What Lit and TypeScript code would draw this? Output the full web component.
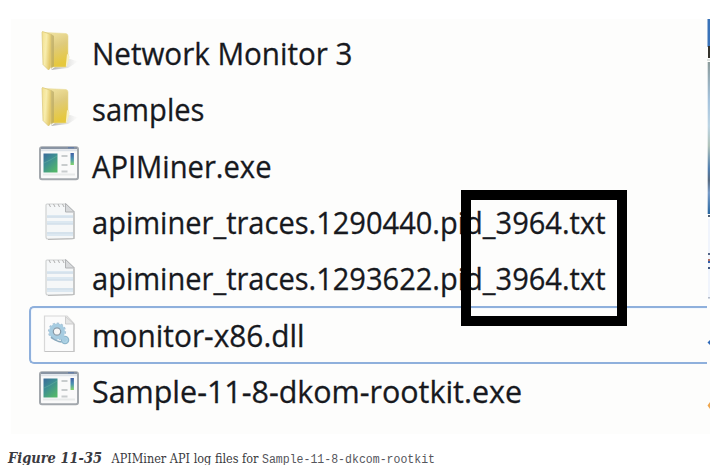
import { LitElement, html, svg, css } from "lit";
import { customElement, property } from "lit/decorators.js";

type Kind = "folder" | "exe" | "txt" | "dll";
interface Entry { name: string; kind: Kind; width: number; selected?: boolean }

const entries: Entry[] = [
  { name: "Network Monitor 3", kind: "folder", width: 260.5 },
  { name: "samples", kind: "folder", width: 112.5 },
  { name: "APIMiner.exe", kind: "exe", width: 179.5 },
  { name: "apiminer_traces.1290440.pid_3964.txt", kind: "txt", width: 513.5 },
  { name: "apiminer_traces.1293622.pid_3964.txt", kind: "txt", width: 513.5 },
  { name: "monitor-x86.dll", kind: "dll", width: 212.5 },
  { name: "Sample-11-8-dkom-rootkit.exe", kind: "exe", width: 430 },
];

const folder = svg`
  <defs>
    <linearGradient id="front" x1="0" x2="1" y1="0" y2="0.3"><stop offset="0" stop-color="#f3e08c"/><stop offset="0.5" stop-color="#f8edae"/><stop offset="1" stop-color="#e3c869"/></linearGradient>
    <linearGradient id="back" x1="0" x2="0.3" y1="0" y2="1"><stop offset="0" stop-color="#f3e6a6"/><stop offset="0.5" stop-color="#dfcb7d"/><stop offset="1" stop-color="#e6c83e"/></linearGradient>
    <linearGradient id="shade" x1="0" x2="1"><stop offset="0" stop-color="#999" stop-opacity="0.8"/><stop offset="1" stop-color="#bbb" stop-opacity="0"/></linearGradient>
  </defs>
  <path d="M28 28L39 31.5L29 38L12 40Z" fill="url(#shade)"/>
  <path d="M5 2.5L27 3.5Q29 4 29 6V24L30 27L27 37L12 37Z" fill="url(#back)" stroke="#eadb98" stroke-width=".6"/>
  <path d="M12 4L15 6V36L12 39Z" fill="#b9a763" opacity=".65"/>
  <path d="M3 2Q3 1 5 2L12 4.5V35Q12 38 9.5 40L4 34.5Z" fill="url(#front)" stroke="#d8c578" stroke-width=".7"/>
  <path d="M28 24Q31 25 30 29L28 36Q26.5 38 27 34Z" fill="#f8f0c4"/>`;

const exe = svg`
  <defs>
    <linearGradient id="pane" x1="0" x2=".7" y1="0" y2="1"><stop offset="0" stop-color="#3a6999"/><stop offset=".45" stop-color="#3e8e93"/><stop offset="1" stop-color="#52b56b"/></linearGradient>
    <linearGradient id="bar" x1="0" x2="0" y1="0" y2="1"><stop offset="0" stop-color="#405fa5"/><stop offset=".5" stop-color="#4b93b0"/><stop offset="1" stop-color="#83d669"/></linearGradient>
  </defs>
  <rect x="1" y="4.2" width="38" height="32" rx="2" fill="#fafafa" stroke="#a3a8ad" stroke-width="2"/>
  <path d="M2 5H38" stroke="#8994a3" stroke-width="2"/>
  <path d="M2 7.2H38" stroke="#dde2e8" stroke-width="2"/>
  <path d="M29 4.7H35" stroke="#667fa8" stroke-width="1.4"/>
  <rect x="4.5" y="10.5" width="14" height="19" fill="url(#pane)"/>
  <path d="M5 20Q10 18 18 13" stroke="#69b6a0" opacity=".5" fill="none"/>
  <path d="M22.5 13H28.5M22.5 22H28.5M22.5 28.5H28.5" stroke="#c8cccd" stroke-width="2"/>
  <rect x="31.5" y="10" width="3.4" height="12" fill="url(#bar)"/>
  <path d="M4 31.5H36" stroke="#e8eaea" stroke-width="2"/>`;

const txt = svg`
  <path d="M8 5H27L35 13V38.5Q35 40 33 40H9Q7 40 7 38V6Q7 5 8 5Z" fill="#f5f7f8" stroke="#d0d2d2" stroke-width="1.2"/>
  <path d="M35 14V39.5L9 40.5" fill="none" stroke="#b8b9b9" stroke-width="1.2"/>
  <path d="M8 16H34V18.5H8ZM8 22H34V25H8ZM8 33H34V37H8Z" fill="#dce8f1"/>
  <path d="M8 18H34M8 25H34M8 34H34" stroke="#d2e0ea" stroke-width="1.6"/>
  <path d="M26.5 4.5V13H35.5Z" fill="#d8dadc" stroke="#b0b2b4" stroke-width="1"/>
  <path d="M10 5L11.5 8M14.5 5L16 8M19 5L20.5 8M23.5 5L25 8" stroke="#b0b0b0" stroke-width="1"/>`;

const dll = svg`
  <path d="M5.5 4H28L35 11.5V39.5H5.5Z" fill="#fbfbfb" stroke="#d8d8d8" stroke-width="1.2"/>
  <path d="M35 12V39.5H6" fill="none" stroke="#c4c4c4" stroke-width="1.2"/>
  <path d="M26.5 4.5V12H35Z" fill="#e5e5e5" stroke="#c4c4c4" stroke-width=".8"/>
  <circle cx="18" cy="19.5" r="8.3" fill="none" stroke="#a9c3d6" stroke-width="1.6" stroke-dasharray="2.3 2"/>
  <circle cx="18" cy="19.5" r="6" fill="#f1f5f7" stroke="#a6cce1" stroke-width="4"/>
  <circle cx="18" cy="19.5" r="3.7" fill="#f6f6f6" stroke="#8297a6" stroke-width="1.2"/>
  <path d="M12 25Q17 29.5 22.5 30" fill="none" stroke="#87a6ba" stroke-width="1.4"/>
  <circle cx="26" cy="28" r="3.6" fill="#b2d7e8" stroke="#8fb6cb" stroke-width="1.4"/>
  <path d="M22 24L27 29" stroke="#a6cce1" stroke-width="4"/>`;

const icons = { folder, exe, txt, dll };

@customElement("file-row")
class FileRow extends LitElement {
  @property({ attribute: false }) entry!: Entry;

  static styles = css`
    :host { display: block; height: 56.4px; }
    .row { box-sizing: border-box; height: 57.4px; display: flex; align-items: center; padding-left: 8px; border: 2px solid transparent; border-right: 0; border-radius: 5px 0 0 5px; }
    .selected { border-color: #8fb0dc; box-shadow: inset 1px 1px 0 #f3f8fe; }
    .icon { width: 40px; height: 42px; flex: none; margin: 0 13px 4px 0; filter: blur(.45px); }
    .name { width: 520px; height: 50px; flex: none; overflow: visible; }
    text { font: 31.5px "Open Sans", "Noto Sans", sans-serif; fill: #17191e; stroke: #17191e; stroke-width: .3px; }
  `;

  render() {
    const e = this.entry;
    return html`<div class="row ${e.selected ? "selected" : ""}">
      <svg class="icon" viewBox="0 0 40 42">${icons[e.kind]}</svg>
      <svg class="name"><text x="0" y="37.4" textLength=${e.width} lengthAdjust="spacingAndGlyphs">${e.name}</text></svg>
    </div>`;
  }
}

@customElement("app-root")
class AppRoot extends LitElement {
  static styles = css`
    :host { display: block; box-sizing: border-box; width: 721px; height: 465px; overflow: hidden; background: #fff; padding: 19px 0 0 11px; }
    .panel { position: relative; box-sizing: border-box; display: flex; width: 699px; height: 415px; background: #fdfdfc; }
    .list { flex: 1; padding: 5.2px 0 0 18px; }
    .highlight { position: absolute; left: 450px; top: 171px; box-sizing: border-box; width: 165.5px; height: 136px; border: 10px solid #000; }
    .edge { width: 3px; height: 415px; flex: none; }
    .caption { display: block; width: 700px; height: 31px; margin-left: -11px; overflow: visible; fill: #3a3a40; }
    .label { font: italic bold 14.5px "DejaVu Serif Condensed", "DejaVu Serif", serif; }
    .body { font: 13px "DejaVu Serif Condensed", "DejaVu Serif", serif; }
    .code { font: 12px "Liberation Mono", monospace; fill: #55555c; }
  `;

  render() {
    return html`
      <div class="panel">
        <div class="list">
          ${entries.map((e, i) => html`<file-row .entry=${{ ...e, selected: i === 5 }}></file-row>`)}
        </div>
        <svg class="edge" viewBox="0 0 3 415">
          <defs><linearGradient id="desk" x1="0" x2="0" y1="0" y2="1">
            <stop offset="0" stop-color="#8c9c9c"/><stop offset=".25" stop-color="#a5c3dd"/><stop offset=".42" stop-color="#bdd5e4"/><stop offset=".55" stop-color="#b1c3ba"/><stop offset=".7" stop-color="#527faf"/><stop offset=".78" stop-color="#576b82"/><stop offset=".86" stop-color="#789cc8"/><stop offset="1" stop-color="#2967a0"/>
          </linearGradient></defs>
          <rect x=".5" width="2.5" height="28" fill="#3972b8"/>
          <rect x="1" y="27" width="2" height="12" fill="#34332c"/>
          <rect y="40" width="3" height="2" fill="#dce2df"/>
          <rect x=".7" y="43" width="2.3" height="152" fill="url(#desk)"/>
          <rect x="1" y="196" width="2" height="2" fill="#506176"/>
          <rect x="1" y="200" width="2" height="80" fill="#f0f4fc"/>
          <rect x="1" y="234" width="2" height="2" fill="#536485"/>
          <rect x="1" y="240" width="2" height="2" fill="#b66f62"/>
          <rect x="1" y="242" width="2" height="2" fill="#315eaa"/>
          <rect x="1" y="248" width="2" height="2" fill="#415980"/>
          <rect x="1" y="278" width="2" height="1.5" fill="#b5bdc9"/>
          <path d="M3 321L.5 323.5L3 326Z" fill="#2e69b8"/>
          <path d="M3 383L.5 386.5L3 390Z" fill="#efa64d"/>
        </svg>
        <div class="highlight"></div>
      </div>
      <svg class="caption">
        <text class="label" x="8" y="29" textLength="94" lengthAdjust="spacingAndGlyphs">Figure 11-35</text>
        <text class="body" x="111.5" y="29" textLength="147" lengthAdjust="spacingAndGlyphs">APIMiner API log files for</text>
        <text class="code" x="262" y="29" textLength="173" lengthAdjust="spacingAndGlyphs">Sample-11-8-dkcom-rootkit</text>
      </svg>`;
  }
}
